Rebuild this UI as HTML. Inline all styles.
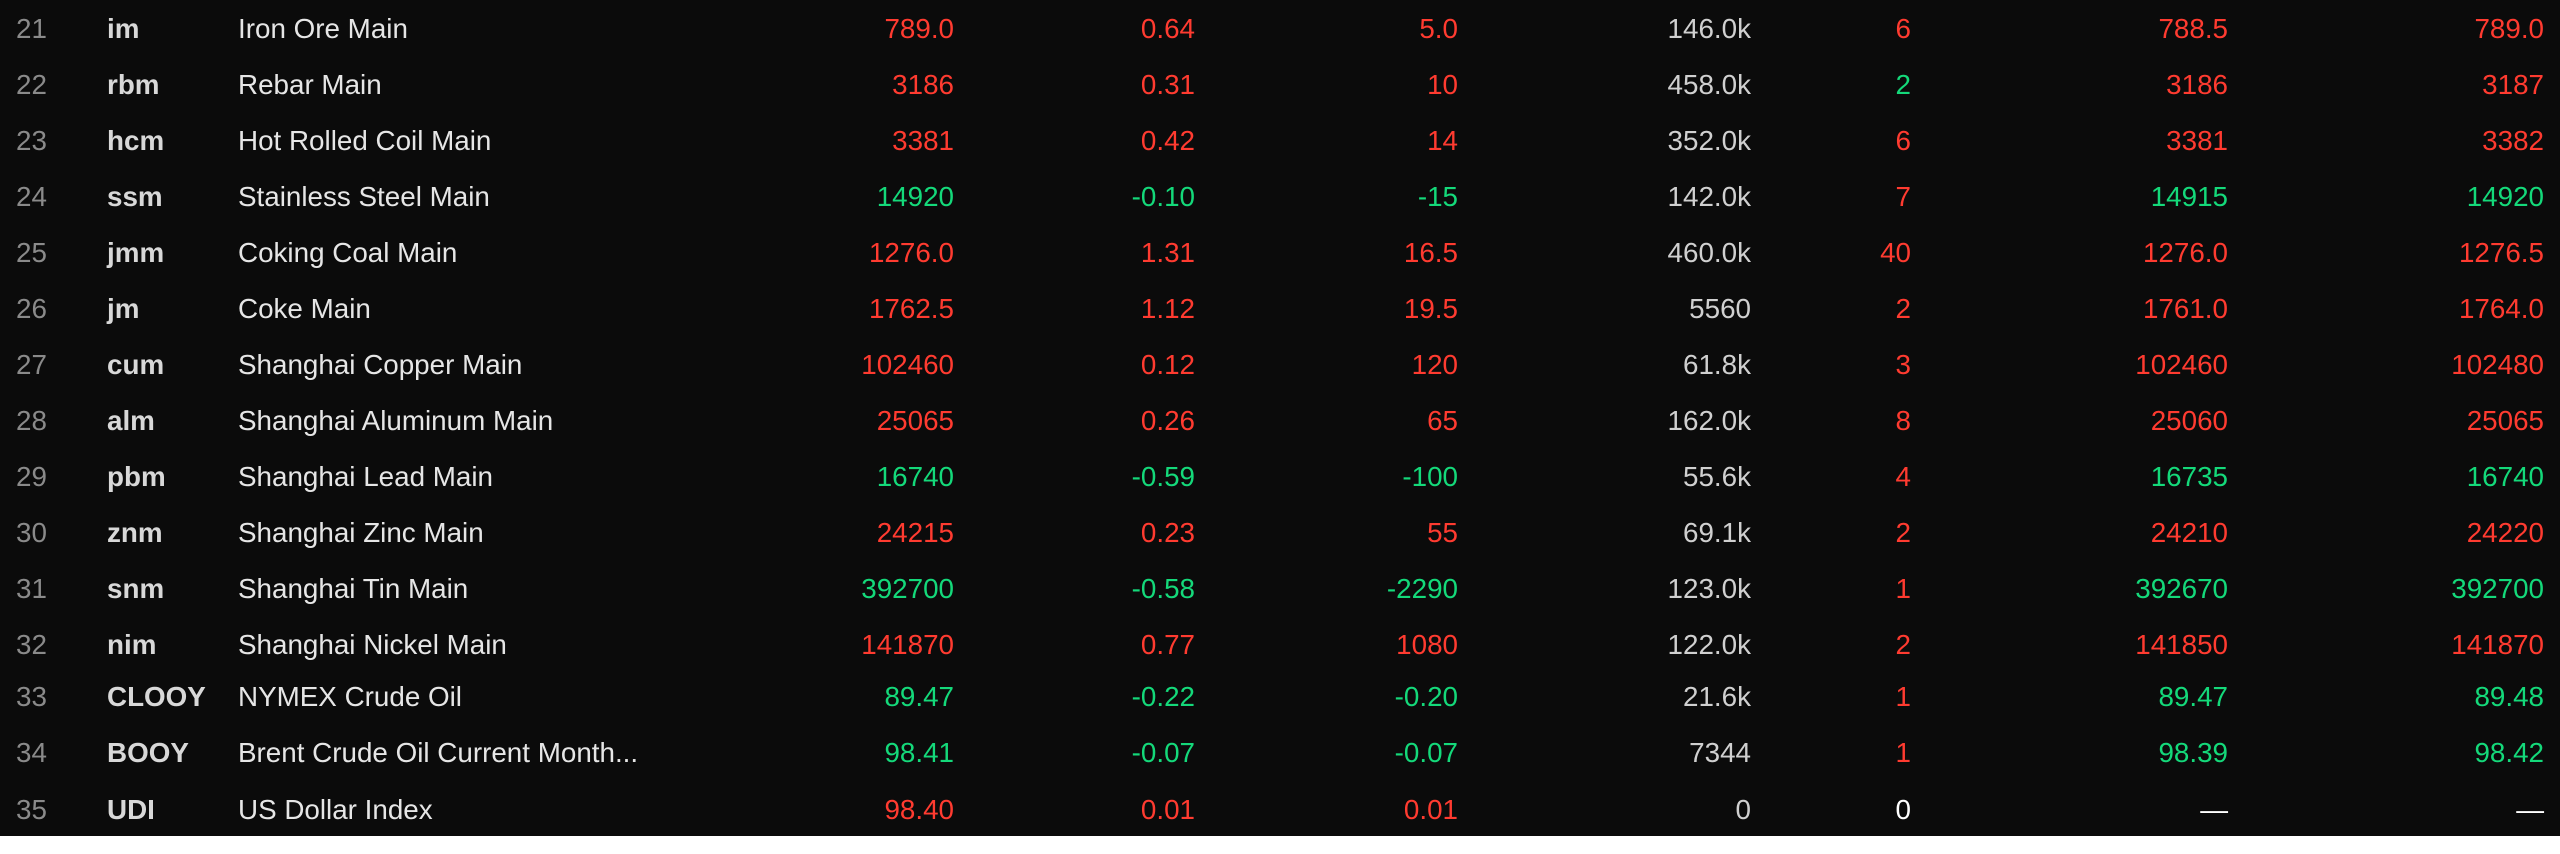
<!DOCTYPE html>
<html><head><meta charset="utf-8"><style>
html,body{margin:0;padding:0;background:#fff;width:2560px;height:854px;overflow:hidden}
.t{position:absolute;left:0;top:0;width:2560px;height:836px;background:#0b0b0b;overflow:hidden;font-family:"Liberation Sans",sans-serif;font-size:27.8px}
.r{position:absolute;left:0;width:2560px;height:56px;line-height:56px}
.r span{position:absolute;white-space:nowrap}
.n{left:16px;color:#8a8a8a}
.c{left:107px;color:#d8d8d8;font-weight:bold}
.m{left:238px;color:#e6e6e6}
.a{right:1606px}.b{right:1365px}.d{right:1102px}.e{right:809px;color:#d0d0d0}.f{right:649px}.g{right:332px}.h{right:16px}
.R{color:#ff3b30}.G{color:#14d97a}.W{color:#fff}
</style></head><body><div class="t">
<div class="r" style="top:1px"><span class="n">21</span><span class="c">im</span><span class="m">Iron Ore Main</span><span class="a R">789.0</span><span class="b R">0.64</span><span class="d R">5.0</span><span class="e">146.0k</span><span class="f R">6</span><span class="g R">788.5</span><span class="h R">789.0</span></div>
<div class="r" style="top:57px"><span class="n">22</span><span class="c">rbm</span><span class="m">Rebar Main</span><span class="a R">3186</span><span class="b R">0.31</span><span class="d R">10</span><span class="e">458.0k</span><span class="f G">2</span><span class="g R">3186</span><span class="h R">3187</span></div>
<div class="r" style="top:113px"><span class="n">23</span><span class="c">hcm</span><span class="m">Hot Rolled Coil Main</span><span class="a R">3381</span><span class="b R">0.42</span><span class="d R">14</span><span class="e">352.0k</span><span class="f R">6</span><span class="g R">3381</span><span class="h R">3382</span></div>
<div class="r" style="top:169px"><span class="n">24</span><span class="c">ssm</span><span class="m">Stainless Steel Main</span><span class="a G">14920</span><span class="b G">-0.10</span><span class="d G">-15</span><span class="e">142.0k</span><span class="f R">7</span><span class="g G">14915</span><span class="h G">14920</span></div>
<div class="r" style="top:225px"><span class="n">25</span><span class="c">jmm</span><span class="m">Coking Coal Main</span><span class="a R">1276.0</span><span class="b R">1.31</span><span class="d R">16.5</span><span class="e">460.0k</span><span class="f R">40</span><span class="g R">1276.0</span><span class="h R">1276.5</span></div>
<div class="r" style="top:281px"><span class="n">26</span><span class="c">jm</span><span class="m">Coke Main</span><span class="a R">1762.5</span><span class="b R">1.12</span><span class="d R">19.5</span><span class="e">5560</span><span class="f R">2</span><span class="g R">1761.0</span><span class="h R">1764.0</span></div>
<div class="r" style="top:337px"><span class="n">27</span><span class="c">cum</span><span class="m">Shanghai Copper Main</span><span class="a R">102460</span><span class="b R">0.12</span><span class="d R">120</span><span class="e">61.8k</span><span class="f R">3</span><span class="g R">102460</span><span class="h R">102480</span></div>
<div class="r" style="top:393px"><span class="n">28</span><span class="c">alm</span><span class="m">Shanghai Aluminum Main</span><span class="a R">25065</span><span class="b R">0.26</span><span class="d R">65</span><span class="e">162.0k</span><span class="f R">8</span><span class="g R">25060</span><span class="h R">25065</span></div>
<div class="r" style="top:449px"><span class="n">29</span><span class="c">pbm</span><span class="m">Shanghai Lead Main</span><span class="a G">16740</span><span class="b G">-0.59</span><span class="d G">-100</span><span class="e">55.6k</span><span class="f R">4</span><span class="g G">16735</span><span class="h G">16740</span></div>
<div class="r" style="top:505px"><span class="n">30</span><span class="c">znm</span><span class="m">Shanghai Zinc Main</span><span class="a R">24215</span><span class="b R">0.23</span><span class="d R">55</span><span class="e">69.1k</span><span class="f R">2</span><span class="g R">24210</span><span class="h R">24220</span></div>
<div class="r" style="top:561px"><span class="n">31</span><span class="c">snm</span><span class="m">Shanghai Tin Main</span><span class="a G">392700</span><span class="b G">-0.58</span><span class="d G">-2290</span><span class="e">123.0k</span><span class="f R">1</span><span class="g G">392670</span><span class="h G">392700</span></div>
<div class="r" style="top:617px"><span class="n">32</span><span class="c">nim</span><span class="m">Shanghai Nickel Main</span><span class="a R">141870</span><span class="b R">0.77</span><span class="d R">1080</span><span class="e">122.0k</span><span class="f R">2</span><span class="g R">141850</span><span class="h R">141870</span></div>
<div class="r" style="top:669px"><span class="n">33</span><span class="c">CLOOY</span><span class="m">NYMEX Crude Oil</span><span class="a G">89.47</span><span class="b G">-0.22</span><span class="d G">-0.20</span><span class="e">21.6k</span><span class="f R">1</span><span class="g G">89.47</span><span class="h G">89.48</span></div>
<div class="r" style="top:725px"><span class="n">34</span><span class="c">BOOY</span><span class="m">Brent Crude Oil Current Month...</span><span class="a G">98.41</span><span class="b G">-0.07</span><span class="d G">-0.07</span><span class="e">7344</span><span class="f R">1</span><span class="g G">98.39</span><span class="h G">98.42</span></div>
<div class="r" style="top:782px"><span class="n">35</span><span class="c">UDI</span><span class="m">US Dollar Index</span><span class="a R">98.40</span><span class="b R">0.01</span><span class="d R">0.01</span><span class="e">0</span><span class="f W">0</span><span class="g W">—</span><span class="h W">—</span></div>
</div></body></html>
